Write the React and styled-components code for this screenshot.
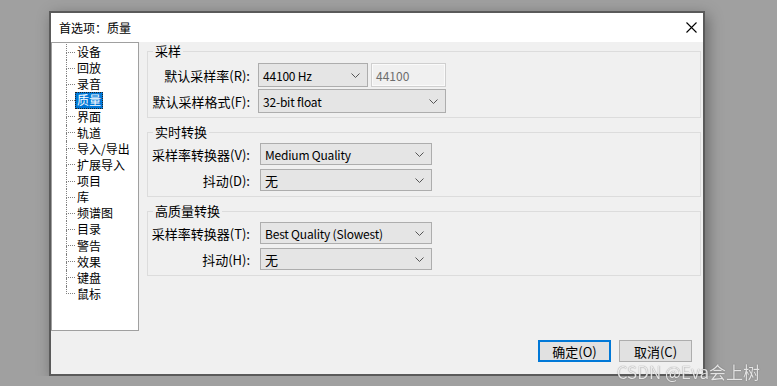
import React from "react"
import styled, { createGlobalStyle } from "styled-components"

const GlobalStyle = createGlobalStyle`
html, body {
  margin: 0;
  background: #a0a0a0;
}
body {
  padding: 11px 0 0 49px;
  font-family: "Noto Sans CJK SC", "Noto Sans", sans-serif;
  font-size: 13px;
  color: #000;
}
`

const Window = styled.div`
width: 656px;
height: 365px;
box-sizing: border-box;
border: 2px solid #5a5a5a;
background: #f0f0f0;
display: flex;
flex-direction: column;
box-shadow: 3px 4px 14px rgba(0,0,0,.35);
`

const TitleBar = styled.div`
height: 29px;
flex: none;
background: #fff;
display: flex;
align-items: center;
justify-content: space-between;
padding: 0 6px 0 8px;
font-size: 12px;
`

const Body = styled.div`
flex: 1;
display: grid;
grid-template-columns: 88px 1fr;
grid-template-rows: 289px 1fr;
`

const Tree = styled.div`
box-sizing: border-box;
background: #fff;
border: 1px solid #a0a0a0;
padding-top: 1px;
font-size: 12px;
`

const TreeItem = styled.div`
height: 16.13px;
display: flex;
align-items: stretch;
padding-left: 14px;
`

const Connector = styled.div`
width: 9px;
display: flex;
flex-direction: column;
`

const Half = styled.div`
flex: 1;
border-left: 1px dotted ${({ $hide }) => ($hide ? "transparent" : "#808080")};
border-bottom: ${({ $top }) => ($top ? "1px dotted #808080" : "none")};
`

const ItemLabel = styled.span`
display: flex;
align-items: center;
padding: 0 1px;
box-sizing: border-box;
border: 1px dotted ${({ $selected }) => ($selected ? "#222" : "transparent")};
background: ${({ $selected }) => ($selected ? "#0078d7" : "transparent")};
color: ${({ $selected }) => ($selected ? "#fff" : "#000")};
line-height: 14px;
`

const Panel = styled.div`
padding: 1px 2px 0 8px;
display: flex;
flex-direction: column;
gap: 6px;
`

const Group = styled.fieldset`
margin: 0;
border: 1px solid #dcdcdc;
padding: 0 5px ${({ $bottom }) => $bottom}px 5px;
min-inline-size: 0;
`

const Legend = styled.legend`
font-size: 13px;
line-height: 16px;
padding: 0 2px;
`

const Rows = styled.div`
display: grid;
grid-template-columns: 97px auto;
grid-auto-rows: ${({ $h }) => $h}px;
row-gap: ${({ $gap }) => $gap}px;
column-gap: ${({ $col }) => $col}px;
margin-top: ${({ $top }) => $top}px;
justify-content: start;
`

const Label = styled.div`
display: flex;
align-items: center;
justify-content: flex-end;
white-space: nowrap;
`

const Controls = styled.div`
display: flex;
gap: 3px;
`

const Select = styled.div`
box-sizing: border-box;
width: ${({ $w }) => $w}px;
height: 100%;
border: 1px solid #adadad;
background: #e5e5e5;
display: flex;
align-items: center;
justify-content: space-between;
padding: 0 7px 0 4px;
white-space: nowrap;
font-size: ${({ $cjk }) => ($cjk ? 13 : 12)}px;
letter-spacing: ${({ $cjk }) => ($cjk ? 0 : -0.2)}px;
`

const TextBox = styled.div`
box-sizing: border-box;
width: 75px;
height: 100%;
border: 1px solid #cfcfcf;
box-shadow: inset 0 0 0 1px #fafafa;
background: #f0f0f0;
color: #6d6d6d;
display: flex;
align-items: center;
padding-left: 4px;
font-size: 12px;
`

const Footer = styled.div`
grid-column: 1 / -1;
display: flex;
justify-content: flex-end;
align-items: flex-start;
gap: 8px;
padding: 9px 11px 0 0;
`

const Button = styled.button`
width: 73px;
height: 22px;
box-sizing: border-box;
margin: 0;
padding: 0;
font: inherit;
font-size: 13px;
color: #000;
background: #e1e1e1;
border: ${({ $primary }) => ($primary ? "2px solid #0078d7" : "1px solid #adadad")};
`

const Watermark = styled.div`
position: fixed;
right: 17px;
bottom: 5px;
font-size: 17px;
line-height: 19px;
color: rgba(255,255,255,.85);
text-shadow: 0 0 1px rgba(0,0,0,.6);
white-space: nowrap;
`

const Chevron = () => (
  <svg width="9" height="5" viewBox="0 0 9 5">
    <polyline points="0.5,0.5 4.5,4.5 8.5,0.5" fill="none" stroke="#555" strokeWidth="1" />
  </svg>
)

const CloseIcon = () => (
  <svg width="11" height="11" viewBox="0 0 11 11">
    <path d="M0.5 0.5 L10.5 10.5 M10.5 0.5 L0.5 10.5" stroke="#000" strokeWidth="1.1" />
  </svg>
)

const pages = ["设备", "回放", "录音", "质量", "界面", "轨道", "导入/导出", "扩展导入", "项目", "库", "频谱图", "目录", "警告", "效果", "键盘", "鼠标"]

export default function App() {
  return (
    <>
      <GlobalStyle />
      <Window>
        <TitleBar>
          <span>首选项：质量</span>
          <CloseIcon />
        </TitleBar>
        <Body>
          <Tree>
            {pages.map((p, i) => (
              <TreeItem key={p}>
                <Connector>
                  <Half $top />
                  <Half $hide={i === pages.length - 1} />
                </Connector>
                <ItemLabel $selected={p === "质量"}>{p}</ItemLabel>
              </TreeItem>
            ))}
          </Tree>
          <Panel>
            <Group $bottom={4}>
              <Legend>采样</Legend>
              <Rows $h={24} $gap={2} $col={8} $top={4}>
                <Label>默认采样率(R):</Label>
                <Controls>
                  <Select $w={110}>44100 Hz<Chevron /></Select>
                  <TextBox>44100</TextBox>
                </Controls>
                <Label>默认采样格式(F):</Label>
                <Select $w={188}>32-bit float<Chevron /></Select>
              </Rows>
            </Group>
            <Group $bottom={5}>
              <Legend>实时转换</Legend>
              <Rows $h={22} $gap={4} $col={10} $top={3}>
                <Label>采样率转换器(V):</Label>
                <Select $w={172}>Medium Quality<Chevron /></Select>
                <Label>抖动(D):</Label>
                <Select $w={172} $cjk>无<Chevron /></Select>
              </Rows>
            </Group>
            <Group $bottom={5}>
              <Legend>高质量转换</Legend>
              <Rows $h={22} $gap={4} $col={10} $top={3}>
                <Label>采样率转换器(T):</Label>
                <Select $w={172}>Best Quality (Slowest)<Chevron /></Select>
                <Label>抖动(H):</Label>
                <Select $w={172} $cjk>无<Chevron /></Select>
              </Rows>
            </Group>
          </Panel>
          <Footer>
            <Button $primary>确定(O)</Button>
            <Button>取消(C)</Button>
          </Footer>
        </Body>
      </Window>
      <Watermark>CSDN @Eva会上树</Watermark>
    </>
  )
}
